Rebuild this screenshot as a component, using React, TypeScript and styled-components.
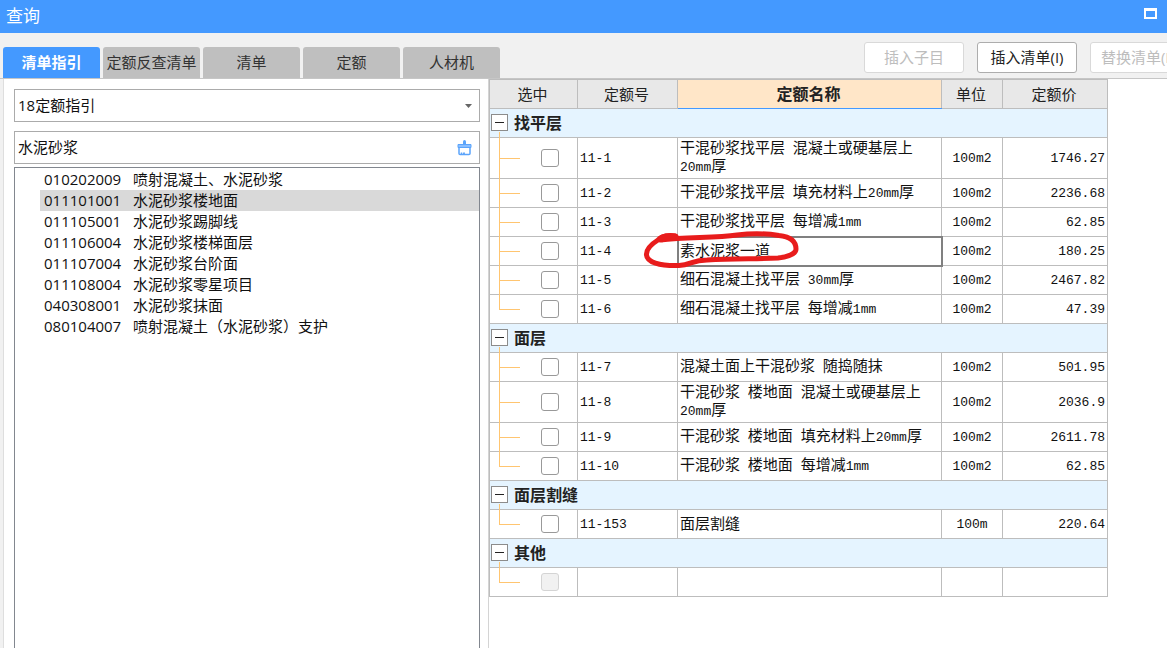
import React from "react";
import styled, { createGlobalStyle, css } from "styled-components";

const GlobalStyle = createGlobalStyle`
  *, *::before, *::after { box-sizing: border-box; }
  body {
    margin: 0;
    background: #fff;
    color: #222;
    font: 15px/21px "Open Sans", "Noto Sans CJK SC", sans-serif;
  }
  button, input, select { font: inherit; color: inherit; }
`;

const Window = styled.div`
  display: flex;
  flex-direction: column;
  min-height: 100vh;
  overflow: hidden;
`;

const TitleBar = styled.header`
  display: flex;
  align-items: flex-start;
  justify-content: space-between;
  height: 33px;
  padding: 5px 10px 0 6px;
  background: #4499ff;
  color: #fff;
`;

const Title = styled.h1`
  margin: 0;
  font-size: 17px;
  line-height: 21px;
  font-weight: 400;
`;

const MaximizeButton = styled.button`
  width: 13px;
  height: 11px;
  margin-top: 3px;
  padding: 0;
  border: 2px solid #fff;
  border-top-width: 3px;
  background: transparent;
`;

const Toolbar = styled.div`
  display: flex;
  justify-content: space-between;
  height: 46px;
  padding: 0 0 0 3px;
  border-bottom: 1px solid #c6c6c6;
  background: #f1f1f1;
`;

const Tabs = styled.nav`
  display: flex;
  align-items: flex-end;
  gap: 3px;
`;

const Tab = styled.button<{ $active?: boolean }>`
  width: 97px;
  height: 31px;
  padding: 0;
  border: 0;
  border-radius: 3px 3px 0 0;
  white-space: nowrap;
  background: ${(p) => (p.$active ? "#4499ff" : "#bfbfbf")};
  color: ${(p) => (p.$active ? "#fff" : "#333")};
  font-weight: ${(p) => (p.$active ? 700 : 400)};
`;

const Actions = styled.div`
  display: flex;
  gap: 13px;
  margin-right: -23px;
  padding-top: 9px;
`;

const ActionButton = styled.button`
  width: 100px;
  height: 31px;
  padding: 0;
  border: 1px solid #adadad;
  border-radius: 3px;
  background: #fff;
  white-space: nowrap;
  &:disabled {
    border-color: #d9d9d9;
    color: #bdbdbd;
  }
`;

const Body = styled.main`
  display: flex;
  flex: 1;
  border-left: 3px solid #f1f1f1;
`;

const Sidebar = styled.aside`
  display: flex;
  flex-direction: column;
  flex: 0 0 486px;
  padding: 10px 8px 0 10px;
  border-left: 1px solid #dedede;
  border-right: 1px solid #d4d4d4;
`;

const Field = styled.label`
  display: flex;
  align-items: center;
  height: 33px;
  margin-bottom: 9px;
  padding: 0 7px 0 3px;
  border: 1px solid #ababab;
  color: #111;
  & + & { margin-bottom: 3px; }
`;

const controlStyle = css`
  flex: 1;
  min-width: 0;
  height: 29px;
  padding: 0;
  border: 0;
  outline: 0;
  background: transparent;
`;

const GuideSelect = styled.select`
  ${controlStyle}
  appearance: none;
`;

const SearchInput = styled.input`
  ${controlStyle}
  padding-bottom: 2px;
`;

const ItemList = styled.ul`
  flex: 1;
  margin: 0;
  padding: 1px 0 0 25px;
  border: 1px solid #82878f;
  border-bottom: 0;
  list-style: none;
  color: #111;
`;

const Item = styled.li<{ $selected?: boolean }>`
  display: flex;
  gap: 10px;
  height: 21px;
  padding-left: 4px;
  background: ${(p) => (p.$selected ? "#d9d9d9" : "transparent")};
`;

const Code = styled.span`
  width: 79px;
`;

const GridPane = styled.section`
  flex: 1;
  min-width: 0;
`;

const Grid = styled.table`
  width: 619px;
  border-collapse: collapse;
  table-layout: fixed;
  color: #111;
  font-family: "Noto Sans CJK SC", sans-serif;
  line-height: 17px;
`;

const HeadCell = styled.th<{ $w: number; $current?: boolean }>`
  width: ${(p) => p.$w}px;
  height: 29px;
  padding: 0 2px 2px 0;
  border: 1px solid #bdbdbd;
  background: ${(p) => (p.$current ? "#ffe6c8" : "#e8e8e8")};
  border-bottom-color: ${(p) => (p.$current ? "#4499ff" : "#bdbdbd")};
  color: #222;
  font-size: ${(p) => (p.$current ? 16 : 15)}px;
  font-weight: ${(p) => (p.$current ? 700 : 400)};
`;

const GroupCell = styled.th`
  height: 29px;
  padding: 0 0 2px 1px;
  border: 1px solid #bdbdbd;
  background: #e5f4ff;
  color: #222;
  font-size: 16px;
  text-align: left;
`;

const GroupHead = styled.div`
  display: flex;
  align-items: center;
  gap: 6px;
`;

const Toggle = styled.button`
  display: flex;
  align-items: center;
  justify-content: center;
  width: 17px;
  height: 17px;
  padding: 0;
  border: 1px solid #8c8c8c;
  background: #fff;
  &::before {
    content: "";
    width: 9px;
    height: 1px;
    background: #222;
  }
`;

const Cell = styled.td<{ $align?: "left" | "center" | "right" }>`
  height: 29px;
  padding: 0 2px 4px;
  border: 1px solid #bdbdbd;
  text-align: ${(p) => p.$align ?? "left"};
`;

const NameCell = styled(Cell)<{ $selected?: boolean }>`
  position: relative;
  ${(p) => p.$selected && css`outline: 2px solid #808080; outline-offset: -1px;`}
`;

const Mono = styled.span`
  font-family: "Liberation Mono", monospace;
  font-size: 13px;
  line-height: 13px;
`;

const TreeCell = styled(Cell)<{ $last: boolean; $first: boolean }>`
  position: relative;
  padding: 0 0 0 51px;
  &::before {
    content: "";
    position: absolute;
    z-index: 1;
    left: 9px;
    top: ${(p) => (p.$first ? -6 : -1)}px;
    bottom: ${(p) => (p.$last ? "50%" : "-1px")};
    border-left: 1px solid #ffc570;
  }
  &::after {
    content: "";
    position: absolute;
    z-index: 1;
    left: 9px;
    top: 50%;
    width: 21px;
    border-top: 1px solid #ffc570;
  }
`;

const Check = styled.input`
  display: block;
  appearance: none;
  width: 18px;
  height: 18px;
  margin: 0;
  border: 1px solid #999;
  border-radius: 3px;
  background: #fff;
  &:disabled {
    border-color: #d4d4d4;
    background: #f1f1f1;
  }
`;

const InkMark = styled.svg`
  position: absolute;
  left: -39px;
  top: -11px;
  width: 164px;
  height: 48px;
  pointer-events: none;
  z-index: 1;
`;

type Row = { no: string; name: string; unit: string; price: string };

const items: [string, string][] = [
  ["010202009", "喷射混凝土、水泥砂浆"],
  ["011101001", "水泥砂浆楼地面"],
  ["011105001", "水泥砂浆踢脚线"],
  ["011106004", "水泥砂浆楼梯面层"],
  ["011107004", "水泥砂浆台阶面"],
  ["011108004", "水泥砂浆零星项目"],
  ["040308001", "水泥砂浆抹面"],
  ["080104007", "喷射混凝土（水泥砂浆）支护"],
];

const row = (no: string, name: string, unit: string, price: string): Row => ({ no, name, unit, price });

const groups: { title: string; rows: Row[] }[] = [
  {
    title: "找平层",
    rows: [
      row("11-1", "干混砂浆找平层 混凝土或硬基层上\n20mm厚", "100m2", "1746.27"),
      row("11-2", "干混砂浆找平层 填充材料上20mm厚", "100m2", "2236.68"),
      row("11-3", "干混砂浆找平层 每增减1mm", "100m2", "62.85"),
      row("11-4", "素水泥浆一道", "100m2", "180.25"),
      row("11-5", "细石混凝土找平层 30mm厚", "100m2", "2467.82"),
      row("11-6", "细石混凝土找平层 每增减1mm", "100m2", "47.39"),
    ],
  },
  {
    title: "面层",
    rows: [
      row("11-7", "混凝土面上干混砂浆 随捣随抹", "100m2", "501.95"),
      row("11-8", "干混砂浆 楼地面 混凝土或硬基层上\n20mm厚", "100m2", "2036.9"),
      row("11-9", "干混砂浆 楼地面 填充材料上20mm厚", "100m2", "2611.78"),
      row("11-10", "干混砂浆 楼地面 每增减1mm", "100m2", "62.85"),
    ],
  },
  { title: "面层割缝", rows: [row("11-153", "面层割缝", "100m", "220.64")] },
  { title: "其他", rows: [row("", "", "", "")] },
];

/* Latin runs are set in the monospaced face, Chinese runs in the cell's own. */
const mixed = (text: string) =>
  text.split("\n").map((line, i) => (
    <React.Fragment key={i}>
      {i > 0 && <br />}
      {line.split(/([\x20-\x7e]+)/).map((run, j) => (j % 2 ? <Mono key={j}>{run}</Mono> : run))}
    </React.Fragment>
  ));

const TALL = 41;

export default function App() {
  return (
    <Window>
      <GlobalStyle />
      <TitleBar>
        <Title>查询</Title>
        <MaximizeButton aria-label="最大化" />
      </TitleBar>
      <Toolbar>
        <Tabs>
          {["清单指引", "定额反查清单", "清单", "定额", "人材机"].map((t, i) => (
            <Tab key={t} $active={i === 0}>{t}</Tab>
          ))}
        </Tabs>
        <Actions>
          <ActionButton disabled>插入子目</ActionButton>
          <ActionButton>插入清单(I)</ActionButton>
          <ActionButton disabled>替换清单(R)</ActionButton>
        </Actions>
      </Toolbar>
      <Body>
        <Sidebar>
          <Field>
            <GuideSelect aria-label="指引">
              <option>18定额指引</option>
            </GuideSelect>
            <svg width="7" height="4" viewBox="0 0 7 4"><path d="M0 0h7L3.5 4z" fill="#666" /></svg>
          </Field>
          <Field>
            <SearchInput aria-label="搜索" defaultValue="水泥砂浆" />
            <svg width="15" height="16" viewBox="0 0 15 16" fill="none" stroke="#5ba4fb">
              <path d="M7.5 1.500v3" strokeWidth="3" strokeLinecap="round" />
              <path d="M1 4.500h13v3H1z" fill="#8abfff" strokeLinejoin="round" />
              <path d="M2 8v5.500q0 1 1 1h9q1 0 1-1V8M4.500 14v-1.500M6.500 14l1-1.500" strokeWidth="1.500" />
            </svg>
          </Field>
          <ItemList role="listbox" aria-label="清单项">
            {items.map(([code, name], i) => (
              <Item key={code} role="option" aria-selected={i === 1} $selected={i === 1}>
                <Code>{code}</Code>
                <span>{name}</span>
              </Item>
            ))}
          </ItemList>
        </Sidebar>
        <GridPane>
          <Grid>
            <thead>
              <tr>
                <HeadCell $w={88}>选中</HeadCell>
                <HeadCell $w={100}>定额号</HeadCell>
                <HeadCell $w={264} $current>定额名称</HeadCell>
                <HeadCell $w={61}>单位</HeadCell>
                <HeadCell $w={105}>定额价</HeadCell>
              </tr>
            </thead>
            {groups.map((g) => (
              <tbody key={g.title}>
                <tr>
                  <GroupCell colSpan={5} scope="rowgroup">
                    <GroupHead>
                      <Toggle aria-label={"折叠" + g.title} />
                      {g.title}
                    </GroupHead>
                  </GroupCell>
                </tr>
                {g.rows.map((r, i) => (
                  <tr key={r.no} style={{ height: r.name.includes("\n") ? TALL : undefined }}>
                    <TreeCell $first={i === 0} $last={i === g.rows.length - 1}>
                      <Check type="checkbox" aria-label={"选中 " + r.no} disabled={!r.no} />
                    </TreeCell>
                    <Cell><Mono>{r.no}</Mono></Cell>
                    <NameCell $selected={r.no === "11-4"}>
                      {mixed(r.name)}
                      {r.no === "11-4" && (
                        <InkMark viewBox="640 227 164 48" fill="none" stroke="#e81c1c" strokeLinecap="round" strokeLinejoin="round">
                          <path
                            d="M676 237C667 236 662 237 659 241C651 246 647 251 647.500 256C648 263 660 267 680 266.500C692 266 693 261 708 261C735 259.500 756 260 779 259C788 258 797 255 797 250C797 243 793 238 780 236.500C765 234 754 234 738 236C716 239 690 238 661 241"
                            strokeWidth="5"
                          />
                          <path d="M663 239.500Q669 236.500 676 238" strokeWidth="7" />
                        </InkMark>
                      )}
                    </NameCell>
                    <Cell $align="center"><Mono>{r.unit}</Mono></Cell>
                    <Cell $align="right"><Mono>{r.price}</Mono></Cell>
                  </tr>
                ))}
              </tbody>
            ))}
          </Grid>
        </GridPane>
      </Body>
    </Window>
  );
}
